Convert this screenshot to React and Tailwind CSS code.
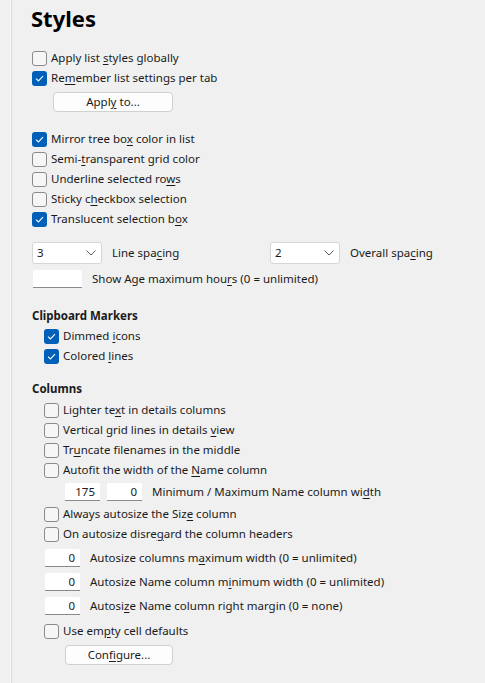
import React from 'react';

// label uses "&" before the access-key letter, like a Win32 resource string
const Label = ({ text }) => {
  const i = text.indexOf('&');
  if (i < 0) return <span>{text}</span>;
  return (
    <span>
      {text.slice(0, i)}
      <span className="underline underline-offset-2">{text[i + 1]}</span>
      {text.slice(i + 2)}
    </span>
  );
};

const Check = ({ checked, label }) => (
  <div className="flex items-center h-[20px]">
    {checked ? (
      <div className="w-[15px] h-[15px] rounded-[3px] bg-[#005fb8] flex items-center justify-center">
        <svg width="9" height="7" viewBox="0 0 9 7" fill="none">
          <path d="M1 3.6 L3.4 6 L8 1.2" stroke="white" strokeWidth="1.1" />
        </svg>
      </div>
    ) : (
      <div className="w-[15px] h-[15px] rounded-[3px] border border-[#8a8a8a] bg-[#f6f6f6]" />
    )}
    <div className="ml-[4px]">
      <Label text={label} />
    </div>
  </div>
);

const Button = ({ label, className }) => (
  <div className={`h-[20px] rounded-[4px] border border-[#d0d0d0] bg-[#fdfdfd] flex items-center justify-center ${className}`}>
    <Label text={label} />
  </div>
);

const Select = ({ value }) => (
  <div className="w-[70px] h-[22px] bg-white border border-[#d6d6d6] rounded-[3px] flex items-center justify-between pl-[4px] pr-[5px]">
    <span>{value}</span>
    <svg width="10" height="6" viewBox="0 0 10 6" fill="none">
      <path d="M0.5 0.5 L5 5 L9.5 0.5" stroke="#5f5f5f" strokeWidth="1" />
    </svg>
  </div>
);

const NumBox = ({ value, className }) => (
  <div className={`h-[18px] bg-white border-b border-[#8a8a8a] rounded-t-[2px] flex items-center justify-end pr-[5px] ${className}`}>
    {value}
  </div>
);

const NumRow = ({ value, label }) => (
  <div className="flex items-center h-[24px] pl-[45px]">
    <NumBox value={value} className="w-[35px]" />
    <div className="ml-[10px]">
      <Label text={label} />
    </div>
  </div>
);

export default function App() {
  return (
    <div
      className="w-[485px] h-[683px] bg-[#f0f0f0] text-[#1a1a1a] text-[11.5px] leading-[16px] flex overflow-hidden"
      style={{ fontFamily: '"Noto Sans", "Open Sans", sans-serif' }}
    >
      <div className="w-[10px]" />
      <div className="w-[1px] bg-[#fbfbfb]" />
      <div className="w-[1px] bg-[#dadada]" />
      <div className="flex-1 flex flex-col">
        <div className="pl-[19px] pt-[3px] h-[48px] text-[22px] leading-[30px] font-bold text-black">Styles</div>

        <div className="pl-[20px] flex flex-col">
          <Check label="Apply list &styles globally" />
          <Check checked label="Re&member list settings per tab" />
          <Button label="Appl&y to..." className="w-[120px] ml-[21px] mt-[4px]" />
        </div>

        <div className="pl-[20px] mt-[17px] flex flex-col">
          <Check checked label="Mirror tree bo&x color in list" />
          <Check label="Semi-&transparent grid color" />
          <Check label="Underline selected ro&ws" />
          <Check label="Sticky c&heckbox selection" />
          <Check checked label="Translucent selection b&ox" />
        </div>

        <div className="pl-[20px] mt-[13px] flex items-center h-[22px]">
          <Select value="3" />
          <div className="ml-[10px] w-[158px]">
            <Label text="Line spa&cing" />
          </div>
          <Select value="2" />
          <div className="ml-[10px]">
            <Label text="Overall spa&cing" />
          </div>
        </div>

        <div className="pl-[21px] mt-[6px] flex items-center h-[18px]">
          <NumBox value="" className="w-[49px]" />
          <div className="ml-[10px]">
            <Label text="Show Age maximum hou&rs (0 = unlimited)" />
          </div>
        </div>

        <div className="pl-[20px] mt-[18px] h-[20px] flex items-center font-bold">Clipboard Markers</div>
        <div className="pl-[32px] flex flex-col">
          <Check checked label="Dimmed &icons" />
          <Check checked label="Colored &lines" />
        </div>

        <div className="pl-[20px] mt-[13px] h-[20px] flex items-center font-bold">Columns</div>
        <div className="pl-[32px] mt-[1px] flex flex-col">
          <Check label="Lighter te&xt in details columns" />
          <Check label="Vertical grid lines in details &view" />
          <Check label="Tr&uncate filenames in the middle" />
          <Check label="Autofit the width of the &Name column" />
        </div>

        <div className="pl-[53px] mt-[2px] flex items-center h-[20px]">
          <NumBox value="175" className="w-[35px]" />
          <NumBox value="0" className="w-[35px] ml-[7px]" />
          <div className="ml-[10px]">
            <Label text="Minimum / Maximum Name column wi&dth" />
          </div>
        </div>

        <div className="pl-[32px] mt-[2px] flex flex-col">
          <Check label="Always autosize the Siz&e column" />
          <Check label="On autosize disre&gard the column headers" />
        </div>

        <div className="-ml-[12px] mt-[2px] flex flex-col">
          <NumRow value="0" label="Autosize columns m&aximum width (0 = unlimited)" />
          <NumRow value="0" label="Autosize Name column m&inimum width (0 = unlimited)" />
          <NumRow value="0" label="Autosi&ze Name column right margin (0 = none)" />
        </div>

        <div className="pl-[32px] mt-[3px] flex flex-col">
          <Check label="Use em&pty cell defaults" />
          <Button label="Con&figure..." className="w-[108px] ml-[21px] mt-[4px]" />
        </div>
      </div>
    </div>
  );
}
